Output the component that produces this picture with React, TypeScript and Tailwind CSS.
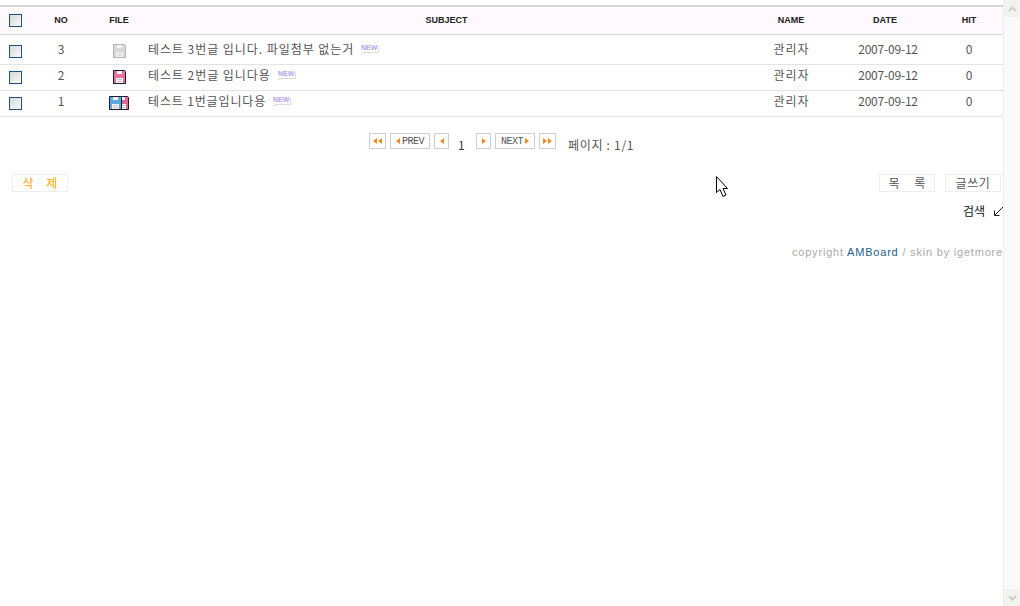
import type { ReactNode } from "react"

const KR = "font-['Noto_Sans_CJK_KR','Liberation_Sans',sans-serif]"

const rows = [
  { no: 3, kind: "none", subject: "테스트 3번글 입니다. 파일첨부 없는거", box: "h-[30px] pt-[5px]", track: "tracking-[0.95px]" },
  { no: 2, kind: "one", subject: "테스트 2번글 입니다용", box: "h-[26px] pt-[1px]", track: "tracking-[0.95px]" },
  { no: 1, kind: "many", subject: "테스트 1번글입니다용", box: "h-[26px] pt-[1px]", track: "tracking-[0.85px]" },
]

function CheckBox() {
  return <span className="block w-[13px] h-[13px] border border-[#1c5180] bg-gradient-to-br from-[#d8d8d3] to-[#fafaf8]" />
}

function Disk({ body, edge, line, x = 0 }: { body: string; edge: string; line: string; x?: number }) {
  return (
    <g transform={`translate(${x} 0)`}>
      <path d="M0.5 0.5H11.5L12.5 1.5V13.5H0.5Z" fill={body} stroke={edge} />
      <rect x="4" y="1" width="5" height="3" fill="#f4f4f4" />
      <rect x="3" y="8" width="7" height="5" fill="#f4f4f4" />
      <path d="M4 9.5H9M4 11.5H9" stroke={line} />
    </g>
  )
}

function FileIcon({ kind }: { kind: string }) {
  if (kind === "many") {
    return (
      <svg width="20" height="14" viewBox="0 0 20 14">
        <Disk body="#e0699a" edge="#1b1b2a" line="#c8c8c8" x={7} />
        <Disk body="#5aa9e0" edge="#1b1b2a" line="#c8c8c8" />
      </svg>
    )
  }
  if (kind === "one") {
    return (
      <svg width="13" height="14" viewBox="0 0 13 14">
        <Disk body="#e8709f" edge="#1b1b2a" line="#c8c8c8" />
      </svg>
    )
  }
  return (
    <svg width="13" height="14" viewBox="0 0 13 14">
      <Disk body="#d8d8d8" edge="#b4b4b4" line="#d8d8d8" />
    </svg>
  )
}

function NewBadge() {
  return (
    <svg width="20" height="12" viewBox="0 0 20 12" className="ml-[6px] shrink-0">
      <path d="M4.5 9.5H18.5V3" fill="none" stroke="#dcdcdc" />
      <path d="M1 11L5 9" stroke="#d0d0d0" />
      <text x="1" y="7" fontSize="7" fontWeight="700" fill="#b3a2ee" fontFamily="Liberation Sans">NEW</text>
    </svg>
  )
}

function Arrow({ dir, double = false }: { dir: "l" | "r"; double?: boolean }) {
  const tri = dir === "l" ? "M4 0V6L0 3Z" : "M0 0V6L4 3Z"
  return (
    <svg width={double ? 9 : 4} height="6" viewBox={double ? "0 0 9 6" : "0 0 4 6"}>
      <path d={tri} fill="#f08a1d" />
      {double && <path d={tri} transform="translate(5 0)" fill="#f08a1d" />}
    </svg>
  )
}

function PageBtn({ w, children }: { w: string; children: ReactNode }) {
  return (
    <span className={`${w} h-[16px] flex items-center justify-center gap-[2px] border border-[#cfcfcf] bg-white text-[10px] leading-none tracking-[-0.5px] text-[#555] font-['Liberation_Mono',monospace] shrink-0`}>
      {children}
    </span>
  )
}

function Label({ children }: { children: ReactNode }) {
  return <span className="pt-[2px]">{children}</span>
}

function TextBtn({ children, className = "" }: { children: ReactNode; className?: string }) {
  return (
    <span className={`w-[56px] h-[18px] flex items-center justify-center border border-[#eeeeee] text-[12px] ${className}`}>
      {children}
    </span>
  )
}

export default function App() {
  return (
    <div className={`relative flex w-[1020px] h-[606px] overflow-hidden bg-white text-[12px] text-[#555] ${KR}`}>
      <main className="w-[1003px] pt-[5px]">
        <div className="h-[30px] flex items-center border-y-2 border-[#d6d6d6] border-b bg-[#fdf9fd] text-[9px] font-bold text-[#222] font-['Liberation_Sans',sans-serif]">
          <span className="w-[30px] pl-[9px]"><CheckBox /></span>
          <span className="w-[60px] pl-[2px] text-center">NO</span>
          <span className="w-[58px] text-center">FILE</span>
          <span className="w-[597px] text-center">SUBJECT</span>
          <span className="w-[90px] pl-[2px] text-center">NAME</span>
          <span className="w-[98px] pl-[2px] text-center">DATE</span>
          <span className="w-[70px] pl-[2px] text-center">HIT</span>
        </div>

        {rows.map((r) => (
          <div key={r.no} className={`${r.box} flex items-start border-b border-[#e3e3e3]`}>
            <span className="w-[30px] pl-[9px] mt-[5px]"><CheckBox /></span>
            <span className="w-[60px] pl-[2px] text-center">{r.no}</span>
            <span className="w-[58px] flex justify-center mt-[4px]"><FileIcon kind={r.kind} /></span>
            <span className="w-[597px] flex items-center">
              <span className={r.track}>{r.subject}</span>
              <NewBadge />
            </span>
            <span className="w-[90px] pl-[3px] text-center tracking-[1px]">관리자</span>
            <span className="w-[98px] pl-[8px] text-center tracking-[-0.2px]">2007-09-12</span>
            <span className="w-[70px] pl-[2px] text-center">0</span>
          </div>
        ))}

        <div className="flex mt-[16px] ml-[369px] h-[16px] gap-[4px]">
          <PageBtn w="w-[17px]"><Arrow dir="l" double /></PageBtn>
          <PageBtn w="w-[40px]"><Arrow dir="l" /><Label>PREV</Label></PageBtn>
          <PageBtn w="w-[15px]"><Arrow dir="l" /></PageBtn>
          <span className="w-[19px] pl-[5px] pt-[3px] text-[#333] leading-[18px]">1</span>
          <PageBtn w="w-[15px]"><Arrow dir="r" /></PageBtn>
          <PageBtn w="w-[40px]"><Label>NEXT</Label><Arrow dir="r" /></PageBtn>
          <PageBtn w="w-[17px]"><Arrow dir="r" double /></PageBtn>
          <span className="ml-[8px] pt-[3px] leading-[18px] tracking-[0.7px]">페이지 : 1/1</span>
        </div>

        <div className="flex justify-between mt-[25px] pl-[12px] pr-[2px]">
          <TextBtn className="text-[#fca600] tracking-[5px] pl-[5px]">삭 제</TextBtn>
          <div className="flex gap-[10px]">
            <TextBtn className="tracking-[6px] pl-[6px]">목 록</TextBtn>
            <TextBtn className="tracking-[0.6px]">글쓰기</TextBtn>
          </div>
        </div>

        <div className="flex justify-end items-center gap-[8px] mt-[10px] h-[18px] text-[#111]">
          <span>검색</span>
          <svg width="11" height="11" viewBox="0 0 11 11" className="-mr-[1px]">
            <path d="M10 1L1.5 9.5M1.5 4.5V9.5H6.5" fill="none" stroke="#222" />
          </svg>
        </div>

        <p className="mt-[25px] text-right text-[11px] tracking-[0.8px] text-[#aaa] font-['Liberation_Sans',sans-serif] leading-[14px]">
          copyright <span className="text-[#1c5f8a]">AMBoard</span> / skin by igetmore
        </p>
      </main>

      <aside className="w-[17px] flex flex-col bg-[#fafafa] border-l border-[#eeeeee]">
        <span className="h-[17px] flex items-center justify-center bg-[#f2f2ee] text-[#ccc]">
          <svg width="9" height="6" viewBox="0 0 9 6"><path d="M1 5L4.5 1.5L8 5" fill="none" stroke="currentColor" strokeWidth="2" /></svg>
        </span>
        <span className="flex-1" />
        <span className="h-[17px] flex items-center justify-center bg-[#f2f2ee] text-[#ccc]">
          <svg width="9" height="6" viewBox="0 0 9 6"><path d="M1 1L4.5 4.5L8 1" fill="none" stroke="currentColor" strokeWidth="2" /></svg>
        </span>
      </aside>

      <svg width="14" height="22" viewBox="0 0 14 22" className="absolute left-[716px] top-[176px]">
        <path d="M0.5 0.5V16.5L4 13.5L7 20.5L10 19L7 12.5H11.5Z" fill="#fff" stroke="#000" />
      </svg>
    </div>
  )
}
